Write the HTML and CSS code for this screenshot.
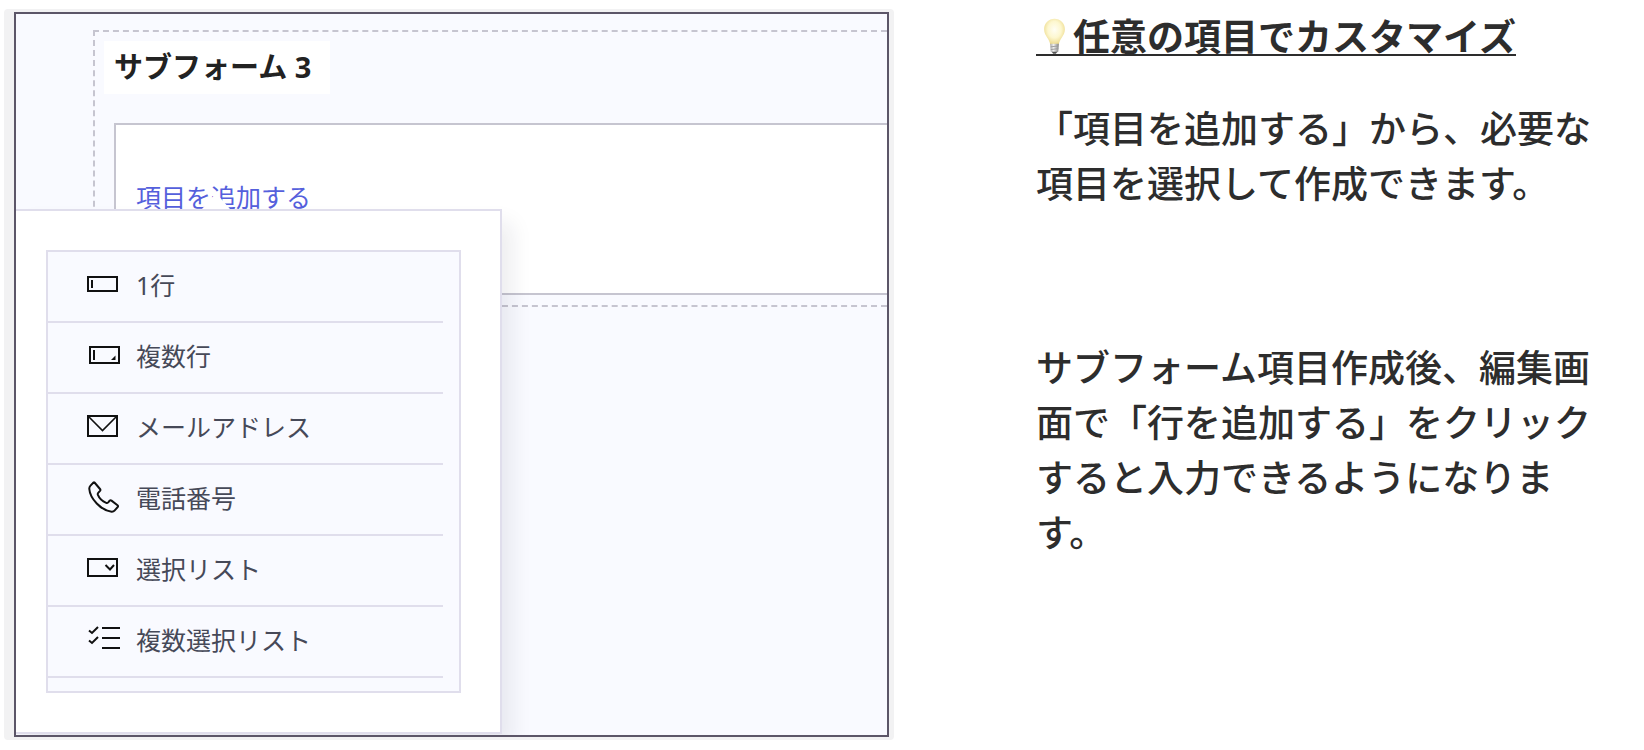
FILE: index.html
```html
<!DOCTYPE html>
<html lang="ja">
<head>
<meta charset="utf-8">
<title>任意の項目でカスタマイズ</title>
<link rel="stylesheet" href="styles.css">
</head>
<body>
<main class="page">
  <figure class="figure">
    <div class="screen">
      <section class="subform">
        <h2 class="subform-title">サブフォーム 3</h2>
        <div class="subform-body">
          <button type="button" class="add-field">項目を追加する</button>
        </div>
      </section>
      <div class="popup">
        <ul class="field-list">
          <li><button type="button" class="field">
            <svg class="icon" viewBox="0 0 33 32" aria-hidden="true"><rect x="1" y="9" width="29" height="14"/><path d="M5 12v8"/></svg>
            1行</button></li>
          <li><button type="button" class="field">
            <svg class="icon" viewBox="0 0 33 32" aria-hidden="true"><rect x="3" y="8" width="29" height="16"/><path d="M7 11v10"/><path class="solid" d="M28.500 16.500v4.500H24z"/></svg>
            複数行</button></li>
          <li><button type="button" class="field">
            <svg class="icon" viewBox="0 0 33 32" aria-hidden="true"><rect x="1" y="6" width="29" height="20"/><path class="thin" d="M1.500 6.500l14 14 14-14"/></svg>
            メールアドレス</button></li>
          <li><button type="button" class="field">
            <svg class="icon" viewBox="0 0 33 32" aria-hidden="true"><path d="M7.500 1.500L13 8c.6.700.6 1.200 0 1.900l-1.800 1.900c-.6.700-.6 1.300-.3 2.100 1.300 3.200 4.500 6.400 8.300 8 .8.300 1.400.1 2-.5l1.400-1.600c.6-.6 1.200-.7 1.900-.2l6 4.700c.6.500.7 1 .3 1.600l-3.300 3.800c-.8.900-1.700 1.200-2.900 1.100C14 29.500 3 17.500 2.300 8c-.1-1.400.2-2.400 1.200-3.400l3-3.100c.4-.4.700-.4 1 0z"/></svg>
            電話番号</button></li>
          <li><button type="button" class="field">
            <svg class="icon" viewBox="0 0 33 32" aria-hidden="true"><rect x="1" y="7" width="29" height="17"/><path d="M18.500 13l4.500 4.500 4-4.500"/></svg>
            選択リスト</button></li>
          <li><button type="button" class="field">
            <svg class="icon" viewBox="0 0 33 32" aria-hidden="true"><path d="M15 5h18M15 15h18M15 25h18M2 7.500l3 2.500 6-6M2 17.500l3 2.500 6-6"/></svg>
            複数選択リスト</button></li>
        </ul>
      </div>
    </div>
  </figure>
  <article class="guide">
    <h1 class="guide-heading"><span class="underlined"><svg class="bulb" viewBox="0 0 36 42" role="img" aria-label="電球">
      <defs>
        <radialGradient id="glass" cx="50%" cy="42%" r="58%"><stop offset="0" stop-color="#fffef4"/><stop offset=".55" stop-color="#fdf7cf"/><stop offset="1" stop-color="#ecd98a"/></radialGradient>
        <linearGradient id="cap"><stop offset="0" stop-color="#a9a9a9"/><stop offset=".4" stop-color="#efefef"/><stop offset="1" stop-color="#858585"/></linearGradient>
      </defs>
      <path fill="url(#glass)" d="M18 2c-6.300 0-11.500 4.900-11.500 11.500 0 4 1.700 6.600 3.500 9.300 1.900 2.700 2.800 4.700 3.200 7.700h9.600c.4-3 1.300-5 3.200-7.700 1.800-2.700 3.500-5.300 3.500-9.300C29.500 6.900 24.300 2 18 2z"/>
      <path fill="url(#cap)" d="M13.200 29.500h9.600l-.6 8.500c-.5 1-2.200 1.500-4.200 1.500s-3.700-.5-4.200-1.500z"/>
      <path fill="none" stroke="#999" d="M13.700 33l8.600-1M13.900 36l8.200-1"/>
      <path fill="#555" d="M15 38.500h6l-1.500 2h-3z"/>
    </svg>任意の項目でカスタマイズ</span></h1>
    <p class="guide-text">「項目を追加する」から、必要な項目を選択して作成できます。</p>
    <p class="guide-text guide-text-later">サブフォーム項目作成後、編集画面で「行を追加する」をクリックすると入力できるようになります。</p>
  </article>
</main>
</body>
</html>
```

FILE: styles.css
```css
* {
  box-sizing: border-box;
}

body {
  margin: 0;
  background: #fff;
  color: #2d2d2d;
  font-family: "Noto Sans CJK JP", sans-serif;
  text-spacing-trim: space-all;
}

button {
  border: 0;
  margin: 0;
  padding: 0;
  background: none;
  font: inherit;
  cursor: pointer;
}

.page {
  display: grid;
  grid-template-columns: 890fr 568fr;
  column-gap: 142px;
  align-items: start;
  padding: 9px 40px 9px 4px;
}

.figure {
  margin: 0;
  padding: 3px 5px 3px 10px;
  border-radius: 4px;
  background: #f2f2f3;
  font-family: "Noto Sans", "Noto Sans CJK JP", sans-serif;
}

/* The form canvas and the popup share one grid cell. */
.screen {
  display: grid;
  overflow: hidden;
  border: 2px solid #5c5668;
  background: #f9faff;
}

.subform {
  grid-area: 1 / 1;
  align-self: start;
  margin: 16px 0 0 77px;
  padding: 9px 0 10px 9px;
  border: 2px dashed #c6c5d0;
  border-right: 0;
}

.subform-title {
  width: max-content;
  margin: 0;
  padding: 4px 19px 5px 10px;
  background: #fff;
  color: #222;
  font-size: 29px;
  line-height: 44px;
}

.subform-body {
  margin: 29px 0 0 10px;
  padding: 55px 20px 79px;
  border: 2px solid #c6c5d0;
  border-right: 0;
  background: #fff;
}

.add-field {
  display: block;
  color: #5560dc;
  font-size: 25px;
  line-height: 34px;
}

.popup {
  grid-area: 1 / 1;
  z-index: 1;
  position: relative;
  width: 486px;
  margin: 195px 0 1px;
  padding: 39px 39px 39px 30px;
  border: 2px solid #e0deec;
  border-left: 0;
  background: #fff;
  box-shadow: 10px 14px 20px rgba(30, 30, 50, 0.08);
}

.popup::before {
  content: "";
  position: absolute;
  bottom: 100%;
  left: 186px;
  margin-bottom: 2px;
  border: 14px solid transparent;
  border-top: 0;
  border-bottom: 16px solid #fff;
}

.field-list {
  margin: 0;
  padding: 0 16px 13px 0;
  border: 2px solid #e0deec;
  background: #f9faff;
  list-style: none;
}

.field {
  display: flex;
  align-items: center;
  gap: 16px;
  width: 100%;
  height: 71px;
  padding: 0 0 5px 39px;
  border-bottom: 2px solid #e0deec;
  color: #464958;
  font-size: 25px;
  text-align: left;
}

.icon {
  flex: none;
  width: 33px;
  height: 32px;
  fill: none;
  stroke: #111;
  stroke-width: 2;
}

.icon .thin {
  stroke-width: 1.6;
}

.icon .solid {
  fill: #111;
  stroke: none;
}

.guide-heading {
  display: flex;
  margin: 0;
  font-size: 37px;
  line-height: 55px;
}

.underlined {
  display: flex;
  align-items: center;
  height: 47px;
  padding-top: 8px;
  border-bottom: 2px solid #2d2d2d;
}

.bulb {
  flex: none;
  width: 37px;
  height: 38px;
}

.guide-text {
  margin: 44px 0 0;
  font-size: 37px;
  font-weight: 500;
  line-height: 55px;
}

.guide-text-later {
  margin-top: 129px;
}
```
